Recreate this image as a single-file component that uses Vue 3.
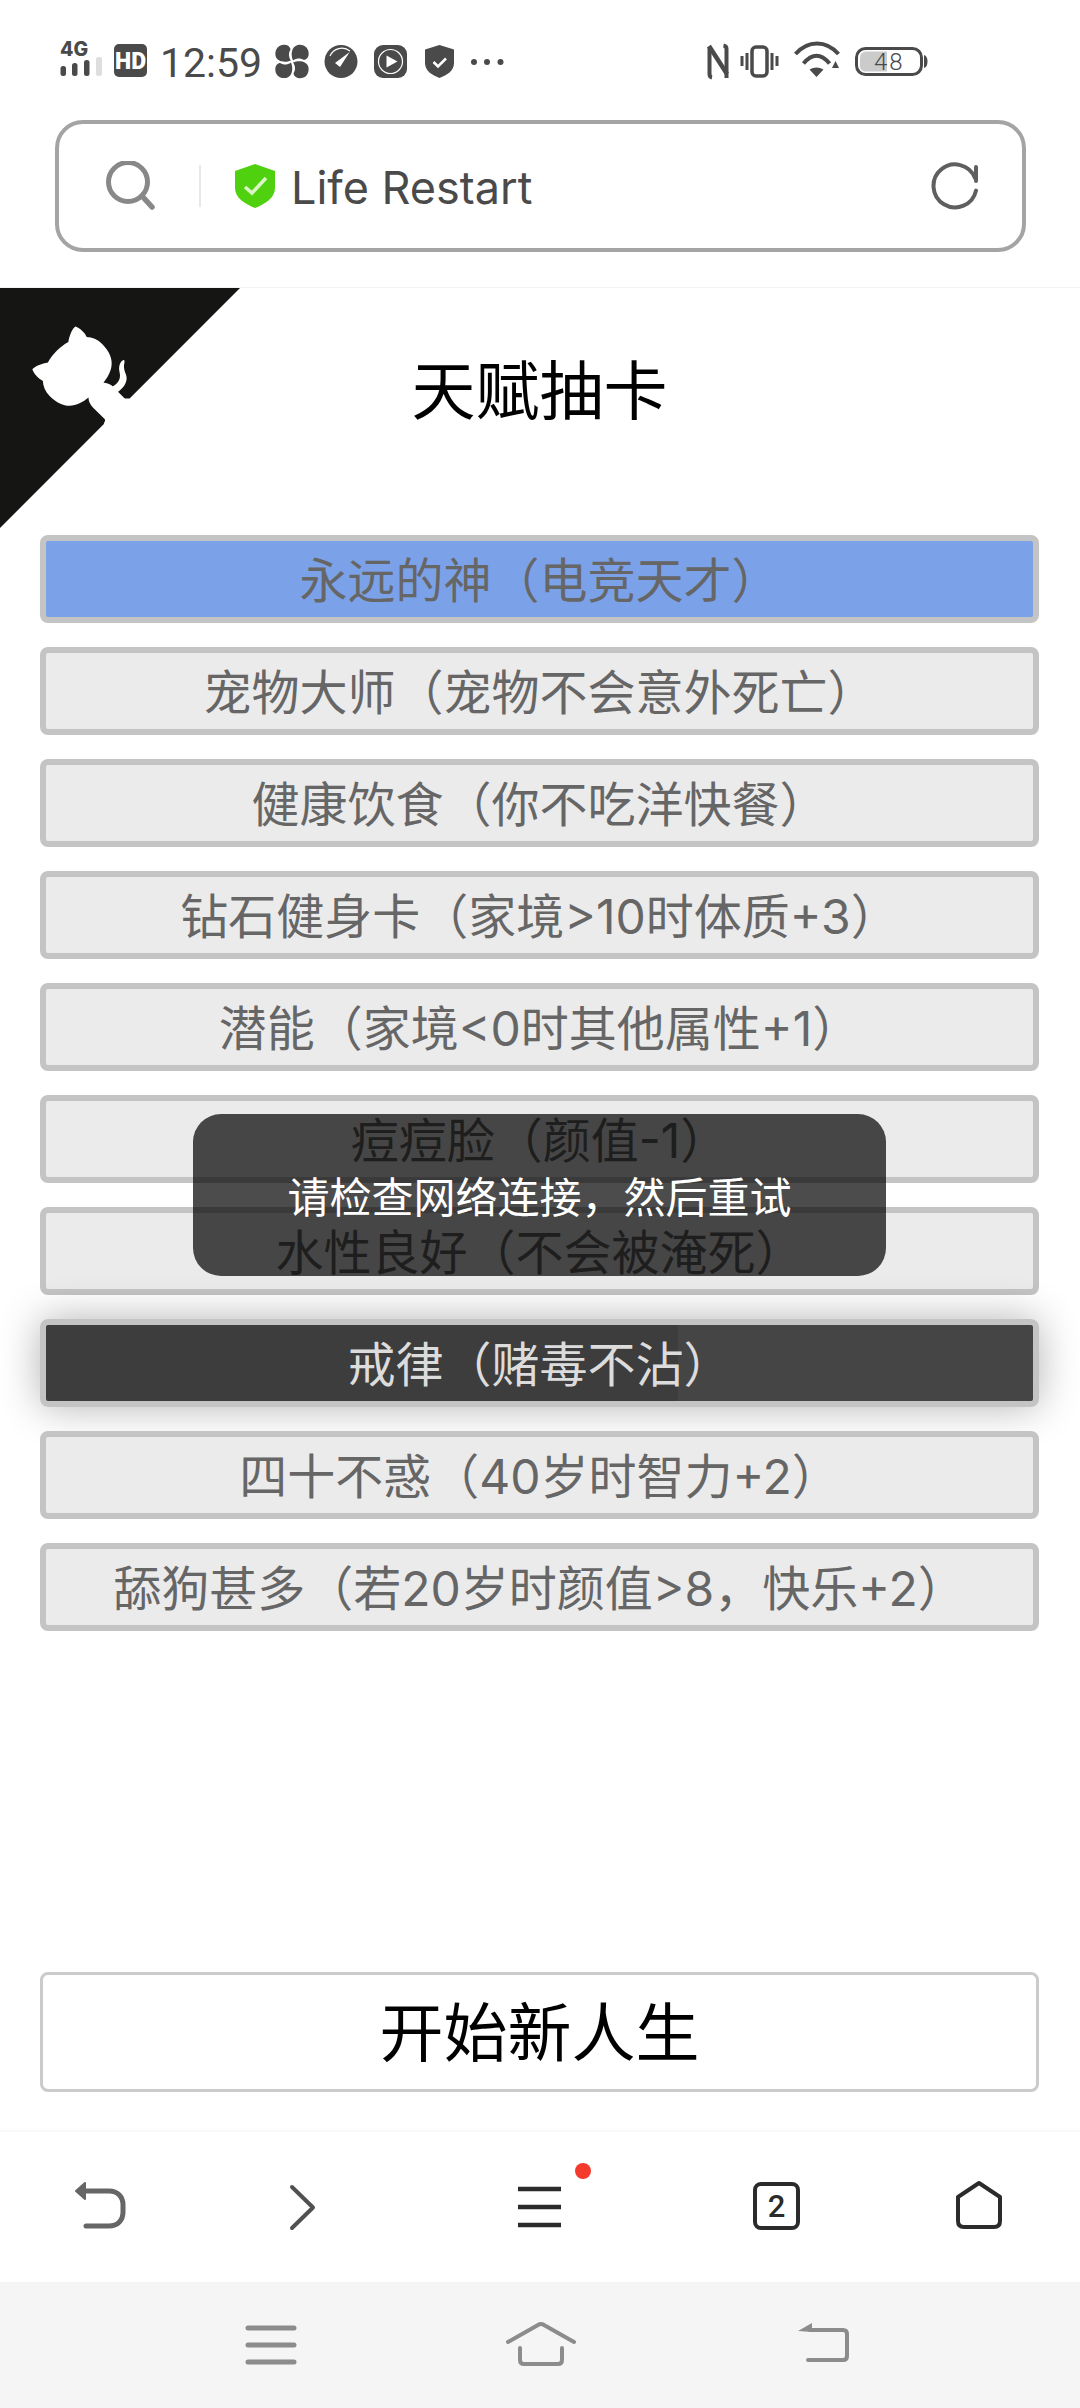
<script setup>
const talents = [
  { text: '永远的神（电竞天才）', kind: 'blue' },
  { text: '宠物大师（宠物不会意外死亡）' },
  { text: '健康饮食（你不吃洋快餐）' },
  { text: '钻石健身卡（家境>10时体质+3）' },
  { text: '潜能（家境<0时其他属性+1）' },
  { text: '痘痘脸（颜值-1）' },
  { text: '水性良好（不会被淹死）' },
  { text: '戒律（赌毒不沾）', kind: 'dark' },
  { text: '四十不惑（40岁时智力+2）' },
  { text: '舔狗甚多（若20岁时颜值>8，快乐+2）' }
]
const petal = 'M15.5 15.5C10 18 2 17 .5 11-.5 4 4 0 9.500.3 13 .5 15 3 15 5 13 8 13 12 15.500 15.500z'
</script>

<template>
  <div class="phone">
    <div class="status">
      <svg class="i" width="42" height="36" viewBox="0 0 42 36">
        <text x="0" y="14" class="t4g">4G</text>
        <rect x="0.5" y="24" width="5.5" height="10" rx="2.500" fill="#4a4a4a" />
        <rect x="12" y="21" width="5.5" height="13" rx="2.500" fill="#4a4a4a" />
        <rect x="24" y="18" width="5.5" height="16" rx="2.500" fill="#4a4a4a" />
        <rect x="36" y="15" width="6" height="19" rx="2" fill="#dedede" />
      </svg>
      <svg class="i ml12" width="33" height="36" viewBox="0 0 33 36">
        <rect y="2" width="33" height="33" rx="5" fill="#4a4a4a" />
        <text x="16.5" y="26.500" text-anchor="middle" class="thd">HD</text>
      </svg>
      <span class="time">12:59</span>
      <svg class="i ml14" width="34" height="36" viewBox="0 0 34 36">
        <g fill="#4a4a4a" transform="translate(0 2.500) scale(1.030)">
          <path :d="petal" />
          <path :d="petal" transform="rotate(90 16.500 16.500)" />
          <path :d="petal" transform="rotate(180 16.500 16.500)" />
          <path :d="petal" transform="rotate(270 16.500 16.500)" />
        </g>
      </svg>
      <svg class="i ml15" width="34" height="36" viewBox="0 0 34 36">
        <circle cx="17" cy="19.500" r="16.500" fill="#4a4a4a" />
        <path d="M6 14A13 13 0 0 1 26 9" fill="none" stroke="#fff" stroke-width="1.200" />
        <path d="M25.700 10L16 25 11 21z" fill="#fff" />
      </svg>
      <svg class="i ml16" width="33" height="36" viewBox="0 0 33 36">
        <rect y="3" width="33" height="33" rx="9" fill="#4a4a4a" />
        <circle cx="16.500" cy="19.500" r="12" fill="none" stroke="#fff" stroke-width="1.200" />
        <path d="M12.500 13.500L23.500 19.500 12.500 25.500z" fill="#fff" />
      </svg>
      <svg class="i ml18" width="29" height="36" viewBox="0 0 29 36">
        <path d="M14.500 3L29 7.500V21c0 8-7 12-14.500 15C7 33 0 29 0 21V7.500z" fill="#4a4a4a" />
        <path d="M8.500 20l4.500 4.500 8-8" fill="none" stroke="#fff" stroke-width="2.500" />
      </svg>
      <svg class="i ml17" width="33" height="36" viewBox="0 0 33 36">
        <circle cx="3" cy="20" r="3" fill="#4a4a4a" />
        <circle cx="16" cy="20" r="3" fill="#4a4a4a" />
        <circle cx="29.500" cy="20" r="3" fill="#4a4a4a" />
      </svg>
      <svg class="i right" width="22" height="36" viewBox="0 0 22 36">
        <path d="M2.500 5V32Q2.500 35 5 35.500" fill="none" stroke="#4a4a4a" stroke-width="4" />
        <path d="M2 4L20 32" fill="none" stroke="#4a4a4a" stroke-width="4.500" />
        <path d="M19.500 36V7Q19.500 4 16.500 3.500" fill="none" stroke="#4a4a4a" stroke-width="4" />
      </svg>
      <svg class="i ml12" width="37" height="36" viewBox="0 0 37 36">
        <rect x="11" y="5" width="15" height="29" rx="4" fill="none" stroke="#4a4a4a" stroke-width="3.500" />
        <path d="M6 11V28M31 11V28" stroke="#4a4a4a" stroke-width="3" />
        <path d="M1 14V24M36 14V24" stroke="#4a4a4a" stroke-width="3" />
      </svg>
      <svg class="i ml16" width="47" height="36" viewBox="0 0 47 36">
        <path d="M1.500 12C14 -2 32 -2 44.500 12" fill="none" stroke="#4a4a4a" stroke-width="4" />
        <path d="M9.500 21.500Q22.500 6 35.500 21.500" fill="none" stroke="#4a4a4a" stroke-width="4" />
        <path d="M15.500 27.500Q22.500 23.500 29.500 27.500L22.500 35z" fill="#4a4a4a" />
        <path d="M45 26H38L41.500 19z" fill="#4a4a4a" />
      </svg>
      <svg class="i ml14" width="72" height="36" viewBox="0 0 72 36">
        <rect x="1.500" y="6.500" width="65" height="26" rx="9" fill="none" stroke="#4a4a4a" stroke-width="3" />
        <path d="M32 9.500H11a6 6 0 0 0-6 6v9a5 5 0 0 0 5 5H32z" fill="#cbcbcb" />
        <path d="M69 13q3.500 1 3.500 6.500T69 26z" fill="#4a4a4a" />
        <text x="19" y="28" class="tbat">48</text>
      </svg>
    </div>

    <div class="urlwrap">
      <div class="urlbar">
        <svg width="50" height="50" viewBox="0 0 50 50">
          <circle cx="22" cy="21" r="19.500" fill="none" stroke="#888" stroke-width="5" />
          <path d="M36 35L46 46" stroke="#888" stroke-width="5.500" stroke-linecap="round" />
        </svg>
        <span class="divider"></span>
        <svg class="shield" width="40" height="44" viewBox="0 0 40 44">
          <path d="M20 0L40 7V24C40 34 30 40 20 44 10 40 0 34 0 24V7z" fill="#4fd10f" />
          <path d="M10 23l7 6L31 14" fill="none" stroke="#d9f6c4" stroke-width="3.500" />
        </svg>
        <span class="url">Life Restart</span>
        <svg class="reload" width="50" height="50" viewBox="0 0 50 50">
          <path d="M46 29.600A21.500 21.500 0 1 1 45 17M46 6V20" fill="none" stroke="#5f5f5f" stroke-width="4" stroke-linecap="round" />
        </svg>
      </div>
    </div>

    <main class="page">
      <svg class="corner" width="240" height="240" viewBox="0 0 250 250" aria-hidden="true">
        <path d="M0,0 L115,115 L130,115 L142,142 L250,250 L250,0 Z" fill="#151513" />
        <path d="M128.300,109.000 C113.800,99.700 119.000,89.600 119.000,89.600 C122.000,82.700 120.500,78.600 120.500,78.600 C119.200,72.000 123.400,76.300 123.400,76.300 C127.300,80.900 125.500,87.300 125.500,87.300 C122.900,97.600 130.600,101.900 134.400,103.200" fill="#fff" />
        <path d="M115.000,115.000 C114.900,115.100 118.700,116.500 119.800,115.400 L133.600,101.600 C136.900,99.200 139.900,98.400 142.200,98.600 C133.800,88.000 127.500,74.400 143.800,58.000 C148.500,53.400 154.000,51.200 159.700,51.000 C160.300,49.400 163.200,43.600 171.400,40.100 C171.400,40.100 176.100,42.500 178.800,56.200 C183.100,58.600 187.200,61.800 190.900,65.400 C194.500,69.000 197.700,73.200 200.100,77.600 C213.800,80.200 216.300,84.900 216.300,84.900 C212.700,93.100 206.900,96.000 205.400,96.600 C205.100,102.400 203.000,107.800 198.300,112.500 C181.900,128.900 168.300,122.500 157.700,114.100 C157.900,116.900 156.700,120.900 152.700,124.900 L141.000,136.500 C139.800,137.700 141.600,141.900 141.800,141.800 Z" fill="#fff" />
      </svg>

      <h1 class="title">天赋抽卡</h1>

      <ul class="list">
        <li v-for="t in talents" :key="t.text" class="talent" :class="t.kind">{{ t.text }}</li>
      </ul>

      <button class="start">开始新人生</button>

      <div class="toast">请检查网络连接，然后重试</div>
    </main>

    <div class="toolbar">
      <svg width="60" height="60" viewBox="0 0 60 60">
        <path d="M13 14H38C47 14 52 20 52 28V35C52 43 47 49 38 49H15" fill="none" stroke="#666" stroke-width="5" stroke-linecap="round" />
        <path d="M5 14L14 6V22z" fill="#666" stroke="#666" stroke-width="2" stroke-linejoin="round" />
      </svg>
      <svg width="60" height="60" viewBox="0 0 60 60">
        <path d="M20 10L41 30.500 20 51" fill="none" stroke="#505050" stroke-width="4" stroke-linecap="round" stroke-linejoin="round" />
      </svg>
      <svg class="over" width="60" height="60" viewBox="0 0 60 60">
        <path d="M8 12H51M8 30H51M8 48H51" stroke="#2b2b2b" stroke-width="4.500" />
        <circle cx="73" cy="-6" r="8" fill="#f4392d" />
      </svg>
      <svg width="60" height="60" viewBox="0 0 60 60">
        <rect x="9" y="7" width="43" height="44" rx="6" fill="none" stroke="#2b2b2b" stroke-width="4" />
        <text x="30.500" y="40" text-anchor="middle" class="ttab">2</text>
      </svg>
      <svg width="60" height="60" viewBox="0 0 60 60">
        <path d="M30 6L9 20V44Q9 50 15 50H45Q51 50 51 44V20z" fill="none" stroke="#2b2b2b" stroke-width="4" stroke-linejoin="round" />
      </svg>
    </div>

    <div class="nav">
      <svg width="70" height="70" viewBox="0 0 70 70">
        <path d="M12 18H58M12 35H58M12 52H58" stroke="#8c8c8c" stroke-width="5" stroke-linecap="round" />
      </svg>
      <svg width="70" height="70" viewBox="0 0 70 70">
        <path d="M2 32L32 15Q35 13 38 15L68 32" fill="none" stroke="#8c8c8c" stroke-width="4" stroke-linecap="round" />
        <path d="M14 38V50Q14 54 18 54H52Q56 54 56 50V38" fill="none" stroke="#8c8c8c" stroke-width="4" stroke-linecap="round" />
      </svg>
      <svg width="70" height="70" viewBox="0 0 70 70">
        <path d="M22 20H55Q59 20 59 24V46Q59 50 55 50H20" fill="none" stroke="#8c8c8c" stroke-width="4" stroke-linecap="round" />
        <path d="M10 21L24 13V22z" fill="#8c8c8c" />
      </svg>
    </div>
  </div>
</template>

<style scoped>
.phone {
  width: 1080px;
  height: 2408px;
  display: flex;
  flex-direction: column;
  overflow: hidden;
  background: #fff;
  font-family: Inter, "Noto Sans CJK SC", sans-serif;
  text-spacing-trim: space-all;
}
.status {
  height: 120px;
  box-sizing: border-box;
  padding: 42px 0 0 60px;
  display: flex;
  align-items: flex-start;
  flex: none;
}
.i { flex: none; display: block; overflow: visible; }
.ml12 { margin-left: 12px; }
.ml14 { margin-left: 14px; }
.ml15 { margin-left: 15px; }
.ml16 { margin-left: 16px; }
.ml17 { margin-left: 17px; }
.ml18 { margin-left: 18px; }
.right { margin-left: 203px; }
.time {
  margin: 3px 0 0 13px;
  width: 101px;
  font: 400 41px/36px Roboto, sans-serif;
  color: #4a4a4a;
  white-space: nowrap;
}
.t4g { font: 800 19.500px Inter, sans-serif; fill: #4a4a4a; }
.thd { font: 900 23px Roboto, sans-serif; fill: #fff; }
.tbat { font: 300 24px Roboto, sans-serif; fill: #4a4a4a; letter-spacing: 2px; }
.ttab { font: 500 31px Roboto, sans-serif; fill: #2b2b2b; }

.urlwrap {
  flex: none;
  padding: 0 54px 35px 55px;
}
.urlbar {
  height: 132px;
  box-sizing: border-box;
  border: 4px solid #a4a4a4;
  border-radius: 28px;
  display: flex;
  align-items: center;
  padding: 0 42px 0 47px;
}
.divider {
  width: 2px;
  height: 42px;
  margin-left: 43px;
  background: #e8e8e8;
}
.shield { margin-left: 34px; }
.url {
  margin: 3px 0 0 16px;
  font: 400 45px/1 Inter, sans-serif;
  color: #4a4a4a;
}
.reload { margin-left: auto; }

.page {
  flex: 1;
  position: relative;
  display: flex;
  flex-direction: column;
  border-top: 1px solid #f3f3f3;
  padding: 0 41px 40px 40px;
  min-height: 0;
}
.corner {
  position: absolute;
  top: 0;
  left: 0;
  transform: scaleX(-1);
}
.title {
  margin: 0;
  height: 247px;
  box-sizing: border-box;
  padding-top: 58px;
  text-align: center;
  font-size: 64px;
  line-height: 90px;
  font-weight: 400;
  color: #000;
}
.list {
  list-style: none;
  margin: 0;
  padding: 0;
  display: flex;
  flex-direction: column;
  gap: 24px;
}
.talent {
  height: 88px;
  box-sizing: border-box;
  border: 6px solid #c4c4c4;
  border-radius: 8px;
  background: #ebebeb;
  color: #666;
  font-size: 48px;
  line-height: 79px;
  text-align: center;
}
.blue { background: #7ba2e8; }
.dark {
  background: linear-gradient(90deg, #3d3d3d 632px, #454545 632px);
  color: #dcdcdc;
  box-shadow: 0 0 40px rgba(0, 0, 0, .3);
}
.start {
  margin-top: auto;
  height: 120px;
  box-sizing: border-box;
  border: 3px solid #cbcbcb;
  border-radius: 8px;
  background: #fff;
  color: #000;
  font-family: inherit;
  font-size: 64px;
  padding: 0 0 8px;
}
.toast {
  position: absolute;
  left: 193px;
  top: 826px;
  width: 693px;
  height: 162px;
  border-radius: 28px;
  background: rgba(0, 0, 0, .7);
  color: #fff;
  font-size: 42px;
  line-height: 167px;
  text-align: center;
}

.toolbar {
  flex: none;
  height: 150px;
  box-sizing: border-box;
  display: grid;
  grid-template-columns: 201px 238px 236px 203px 60px;
  align-content: center;
  padding-left: 71px;
  background: #fff;
  box-shadow: 0 -2px 3px rgba(0, 0, 0, .03);
  position: relative;
}
.toolbar svg { display: block; }
.over { overflow: visible; }
.nav {
  flex: none;
  height: 126px;
  box-sizing: border-box;
  display: grid;
  grid-template-columns: 270px 282px 70px;
  align-content: center;
  padding-left: 236px;
  background: #f5f5f5;
}
.nav svg { display: block; }
</style>
